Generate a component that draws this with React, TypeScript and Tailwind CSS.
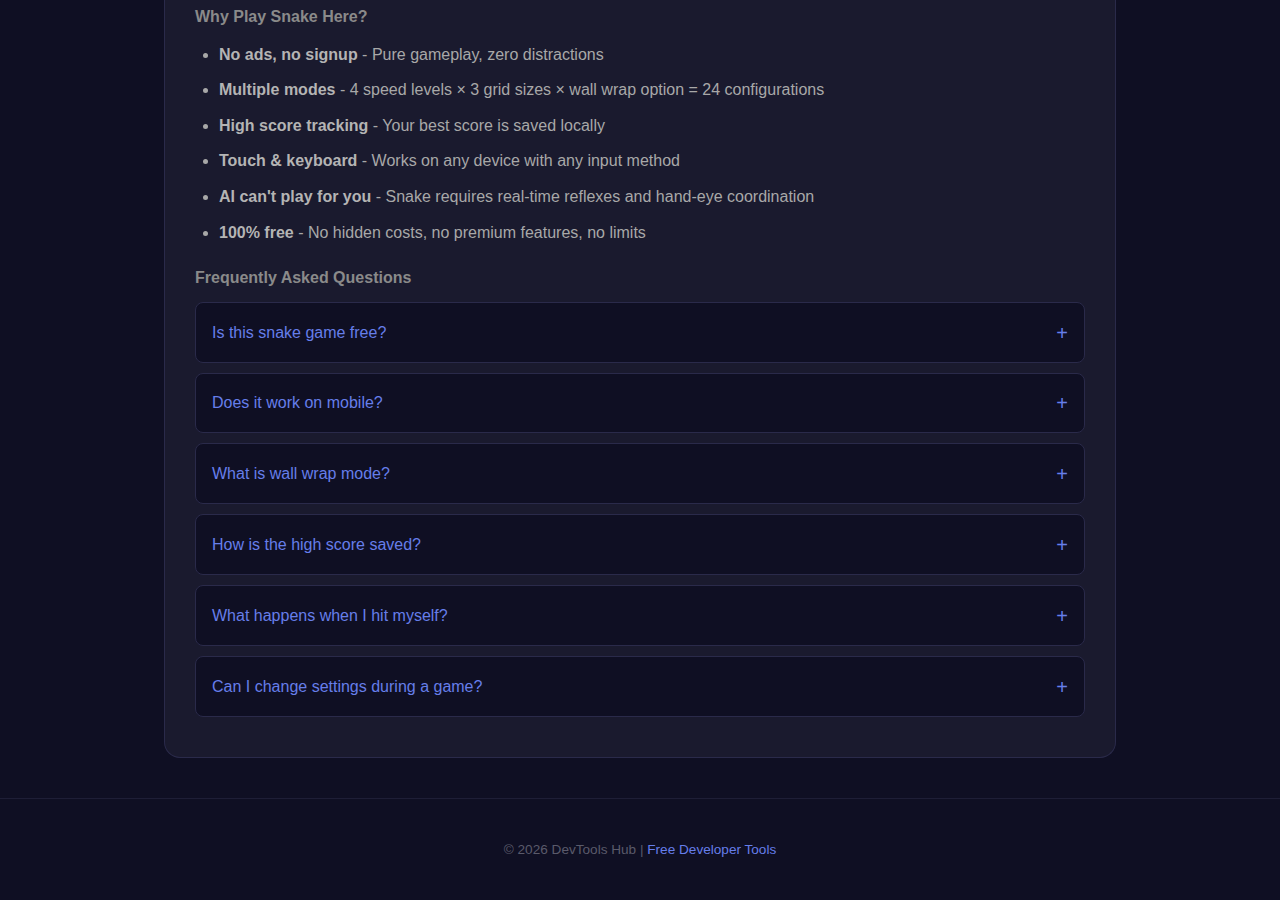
import React from "react";

const features: [string, string][] = [
  ["No ads, no signup", "Pure gameplay, zero distractions"],
  ["Multiple modes", "4 speed levels × 3 grid sizes × wall wrap option = 24 configurations"],
  ["High score tracking", "Your best score is saved locally"],
  ["Touch & keyboard", "Works on any device with any input method"],
  ["AI can't play for you", "Snake requires real-time reflexes and hand-eye coordination"],
  ["100% free", "No hidden costs, no premium features, no limits"],
];

const faqs = [
  "Is this snake game free?",
  "Does it work on mobile?",
  "What is wall wrap mode?",
  "How is the high score saved?",
  "What happens when I hit myself?",
  "Can I change settings during a game?",
];

export default function App() {
  return (
    <div
      className="min-h-[900px] bg-[#0f0f23] text-[#aaaaaa]"
      style={{ fontFamily: '"Liberation Sans", Arial, sans-serif' }}
    >
      <div className="mx-auto w-[952px] rounded-b-2xl border-x border-b border-[#2a2a4a] bg-[#1a1a2e] px-[30px] pb-10">
        <h3 className="pt-[4px] text-base font-bold leading-[1.6] text-[#8a8a8a]">Why Play Snake Here?</h3>
        <ul className="mt-3 list-disc pl-6">
          {features.map(([b, t]) => (
            <li key={b} className="mb-2.5 text-base leading-[1.6] text-[#a8a8a8] marker:text-[#a8a8a8]">
              <strong className="font-bold text-[#b4b4b4]">{b}</strong> - {t}
            </li>
          ))}
        </ul>
        <h3 className="mt-[20px] text-base font-bold leading-[1.6] text-[#8a8a8a]">Frequently Asked Questions</h3>
        <div className="mt-[11px] flex flex-col gap-[10px]">
          {faqs.map((q) => (
            <div
              key={q}
              className="flex h-[60.8px] items-center justify-between rounded-lg border border-[#2a2a4a] bg-[#0f0f23] px-4 pt-px"
            >
              <span className="text-base text-[#667eea]">{q}</span>
              <span className="text-xl leading-none text-[#667eea]">+</span>
            </div>
          ))}
        </div>
      </div>
      <footer className="mt-10 border-t border-[#1e1e36] pt-[41px] pb-10 text-center text-[13.6px] text-[#5a5a6a]">
        © 2026 DevTools Hub | <a className="text-[#667eea]">Free Developer Tools</a>
      </footer>
    </div>
  );
}
